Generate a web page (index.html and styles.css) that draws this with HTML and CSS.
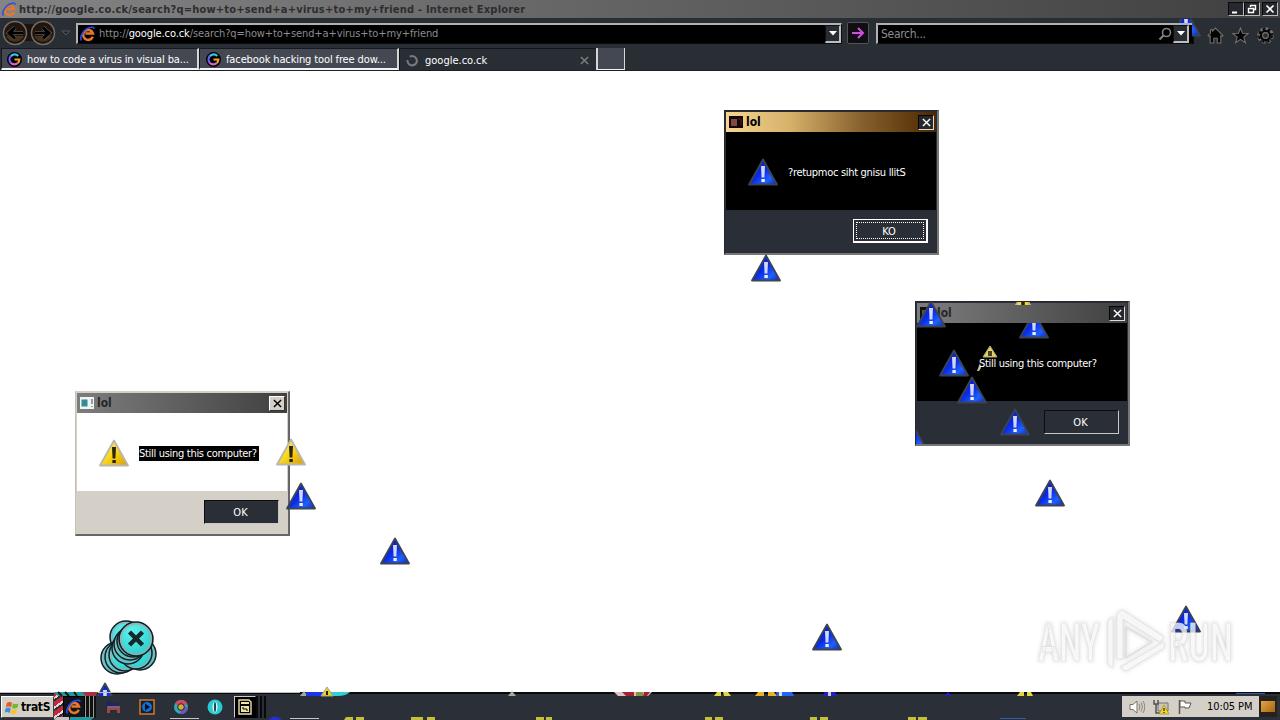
FILE: index.html
```html
<!DOCTYPE html>
<html lang="en">
<head>
    <meta charset="UTF-8">
    <meta name="viewport" content="width=device-width, initial-scale=1.0">
    <title>Internet Explorer</title>
    <link rel="stylesheet" href="styles.css">
</head>
<body>
    <svg class="defs">
        <defs>
            <linearGradient id="blueFill" x1="0" y1="0" x2="1" y2="1">
                <stop offset="0" stop-color="#0018c0"/>
                <stop offset="0.5" stop-color="#0a2ce8"/>
                <stop offset="0.75" stop-color="#2060fa"/>
                <stop offset="1" stop-color="#0624d8"/>
            </linearGradient>
            <linearGradient id="yellowFill" x1="0" y1="0" x2="1" y2="1">
                <stop offset="0" stop-color="#fff27a"/>
                <stop offset="0.5" stop-color="#f8d81c"/>
                <stop offset="1" stop-color="#d99a00"/>
            </linearGradient>
            <radialGradient id="cyanFill" cx="0.4" cy="0.3" r="0.8">
                <stop offset="0" stop-color="#5ff2ee"/>
                <stop offset="1" stop-color="#22c9c9"/>
            </radialGradient>
        </defs>
        <symbol id="warn-blue" viewBox="0 0 30 28">
            <path d="M15 1.5 L29 26.5 H1 Z" fill="url(#blueFill)" stroke="#3d4450" stroke-width="1.8" stroke-linejoin="round"/>
            <path d="M13 8h4l-.6 11.500h-2.800z" fill="#d4d8f6"/>
            <rect x="13.4" y="21" width="3.4" height="3" fill="#eef0ff"/>
        </symbol>
        <symbol id="warn-yellow" viewBox="0 0 30 28">
            <path d="M15 1.5 L29 26.5 H1 Z" fill="url(#yellowFill)" stroke="#b9b6b0" stroke-width="1.8" stroke-linejoin="round"/>
            <path d="M13 8h4l-.6 11.500h-2.800z" fill="#2b2408"/>
            <rect x="13.4" y="21" width="3.4" height="3" fill="#2b1c00"/>
        </symbol>
        <symbol id="ie" viewBox="0 0 16 16">
            <path d="M12.8 10.8A5 5 0 1 1 13 7.600H5.500" fill="none" stroke="#e87828" stroke-width="2.500"/>
            <path d="M1.500 14.500C-1 11 4 3 10 1.500c2.500-.7 4-.3 4 1.500" fill="none" stroke="#2a4cf0" stroke-width="1.600"/>
        </symbol>
        <symbol id="google" viewBox="0 0 16 16">
            <circle cx="8" cy="8" r="8" fill="#000"/>
            <path d="M12 4.300A5.200 5.200 0 0 0 4 4.600" fill="none" stroke="#30c8f0" stroke-width="2.300"/>
            <path d="M4 4.600a5.200 5.200 0 0 0 0 6.900" fill="none" stroke="#7060ff" stroke-width="2.300"/>
            <path d="M4 11.500a5.200 5.200 0 0 0 7.500.2" fill="none" stroke="#e060c8" stroke-width="2.300"/>
            <path d="M8 8h5.200a5 5 0 0 1-1.700 3.700" fill="none" stroke="#f0a030" stroke-width="2.300"/>
        </symbol>
        <symbol id="close" viewBox="0 0 10 10">
            <path d="M1 1l8 8M9 1l-8 8" fill="none" stroke="currentColor" stroke-width="1.600"/>
        </symbol>
        <symbol id="error-ball" viewBox="0 0 34 34">
            <circle cx="17" cy="17" r="16" fill="url(#cyanFill)" stroke="#151c22" stroke-width="1.500"/>
            <circle cx="17" cy="17" r="14.300" fill="none" stroke="#b99fa5" stroke-width="1"/>
        </symbol>
    </svg>

    <div class="screen">
        <header class="title-bar">
            <svg class="ie-small"><use href="#ie"/></svg>
            <span class="title-text">http://google.co.ck/search?q=how+to+send+a+virus+to+my+friend - Internet Explorer</span>
            <div class="window-buttons">
                <span class="win-btn"><svg viewBox="0 0 12 10"><path d="M2 8.500h5" stroke="#fff" stroke-width="2"/></svg></span>
                <span class="win-btn"><svg viewBox="0 0 12 10"><path d="M4.500 3V1.500h5v4H8M2.500 4.500h5v4h-5z" fill="none" stroke="#fff" stroke-width="1.400"/></svg></span>
                <span class="win-btn last"><svg viewBox="0 0 12 10"><path d="M2.500 1.500l7 7M9.500 1.500l-7 7" stroke="#fff" stroke-width="1.700"/></svg></span>
            </div>
        </header>

        <nav class="nav-bar">
            <svg class="nav-arrows" viewBox="0 0 56 28">
                <rect x="14" y="5" width="28" height="17" fill="#1c120e"/>
                <circle cx="14" cy="14" r="11.500" fill="#21150f" stroke="#726d65" stroke-width="1.500"/>
                <circle cx="42" cy="14" r="11.500" fill="#21150f" stroke="#726d65" stroke-width="1.500"/>
                <path d="M5 17a10 10 0 0 0 18 0zM33 17a10 10 0 0 0 18 0z" fill="#49311f"/>
                <path d="M22 14H8m6-5.500L8 14l6 5.500" fill="none" stroke="#8b8175" stroke-width="4.200"/>
                <path d="M22 14H8m6-5.500L8 14l6 5.500" fill="none" stroke="#000" stroke-width="3.200"/>
                <path d="M34 14h14m-6-5.500l6 5.500-6 5.500" fill="none" stroke="#8b8175" stroke-width="4.200"/>
                <path d="M34 14h14m-6-5.500l6 5.500-6 5.500" fill="none" stroke="#000" stroke-width="3.200"/>
            </svg>
            <svg class="nav-caret" viewBox="0 0 10 6"><path d="M1 1h8L5 5z" fill="#23262c" stroke="#555a62"/></svg>
            <div class="address-bar">
                <svg class="ie-icon"><use href="#ie"/></svg>
                <span class="url">http://<b>google.co.ck</b>/search?q=how+to+send+a+virus+to+my+friend</span>
                <span class="drop-btn"><svg viewBox="0 0 8 5"><path d="M0 0h8L4 4.500z" fill="#fff"/></svg></span>
            </div>
            <div class="go-btn">
                <svg viewBox="0 0 14 14"><path d="M1 7h11M7 2l5 5-5 5" fill="none" stroke="#cf4fe0" stroke-width="2"/></svg>
            </div>
            <div class="search-bar">
                <span class="search-text">Search...</span>
                <svg class="magnifier" viewBox="0 0 14 14"><circle cx="8.500" cy="5.500" r="4" fill="none" stroke="#85817c" stroke-width="1.600"/><path d="M5.500 8.500L1.500 12.500" stroke="#85817c" stroke-width="2.200"/></svg>
                <span class="drop-btn"><svg viewBox="0 0 8 5"><path d="M0 0h8L4 4.500z" fill="#fff"/></svg></span>
            </div>
            <div class="tools">
                <svg viewBox="0 0 16 16"><path d="M8 1l7 7-1 1-1-.6V15H9.600v-4.500H6.400V15H3V8.400L2 9 1 8l2.300-2.300V2.500h2v1.200z" fill="#050505" stroke="#77716c"/></svg>
                <svg viewBox="0 0 16 16"><path d="M8 .8l1.900 5.100 5.400.2-4.200 3.400 1.500 5.300L8 11.700l-4.600 3.100 1.500-5.300L.7 6.100l5.400-.2z" fill="#050505" stroke="#77716c"/></svg>
                <svg viewBox="0 0 16 16"><circle cx="8" cy="8" r="6.200" fill="none" stroke="#77716c" stroke-width="3.200" stroke-dasharray="2.900 1.970"/><circle cx="8" cy="8" r="6" fill="none" stroke="#050505" stroke-width="2" stroke-dasharray="1.900 2.970" stroke-dashoffset="-.5"/><circle cx="8" cy="8" r="4.200" fill="#292d34" stroke="#050505" stroke-width="2"/><circle cx="8" cy="8" r="2.700" fill="#292d34" stroke="#77716c"/></svg>
            </div>
        </nav>

        <div class="tab-bar">
            <div class="tab tab-first"><svg><use href="#google"/></svg><span>how to code a virus in visual ba...</span></div>
            <div class="tab tab-second"><svg><use href="#google"/></svg><span>facebook hacking tool free dow...</span></div>
            <div class="tab tab-active">
                <svg viewBox="0 0 16 16"><path d="M4 4.500A5 5 0 1 0 8 3" transform="rotate(-35 8 8)" fill="none" stroke="#777c83" stroke-width="2.200"/></svg>
                <span>google.co.ck</span>
                <svg class="tab-close"><use href="#close"/></svg>
            </div>
            <div class="new-tab"></div>
        </div>

        <main class="page"></main>

        <footer class="taskbar">
            <div class="start-btn">
                <svg viewBox="0 0 16 16"><path d="M2 3q3-2 5.500 0L6.500 8Q4 6 .8 8z" fill="#e85b28"/><path d="M8.500 3.400q3 1.800 6 0L13.400 8q-3 2-6 .4z" fill="#74b83a"/><path d="M.6 9q3-2 5.600 0L5 14Q2.500 12-.4 13.500z" fill="#3d8edd"/><path d="M7.200 9.500q3 1.500 6 0L12 14.300q-3 1.500-6 0z" fill="#f5c52c"/></svg>
                <b>tratS</b>
            </div>
            <div class="glitch"></div>
            <div class="task task-ie"><svg><use href="#ie"/></svg></div>
            <div class="task-edge"></div>
            <div class="quick">
                <svg viewBox="0 0 16 16"><path d="M1 2h5l1 2h7v8H1z" fill="#20285a"/><path d="M2 7h13v7h-3v-3H5v3H2z" fill="#9c4b38"/><path d="M3 8h11" stroke="#4878d8"/></svg>
                <svg viewBox="0 0 16 16"><rect x="1" y="1" width="14" height="14" fill="#101e35" stroke="#d47a20" stroke-width="1.500"/><circle cx="8" cy="8" r="5" fill="#1470d0"/><path d="M6 4.500l5 3.500-5 3.500z" fill="#08101c"/></svg>
                <svg viewBox="0 0 16 16"><circle cx="8" cy="8" r="7" fill="#28aeb0"/><path d="M8 8L2 4.500A7 7 0 0 1 14.500 5z" fill="#ce4b64"/><path d="M8 8h7a7 7 0 0 1-8 7z" fill="#7454bf"/><circle cx="8" cy="8" r="3.300" fill="#d8a83c" stroke="#26202a"/></svg>
                <svg viewBox="0 0 16 16"><circle cx="8" cy="8" r="7.500" fill="#27cbd2"/><ellipse cx="8" cy="8" rx="2.500" ry="5.500" fill="#e9fbfa"/><ellipse cx="8" cy="8" rx="1.100" ry="5" fill="#174b55"/></svg>
            </div>
            <div class="task task-app"><svg viewBox="0 0 16 16"><path d="M2 1h10l2 2v12H2z" fill="#000" stroke="#e8e0b0" stroke-width="1.400"/><path d="M4 4h8" stroke="#f3e7a0" stroke-width="2"/><rect x="4" y="7" width="8" height="6" fill="#efe3a0"/><path d="M5 9h2v2m2-2v2h2" fill="none" stroke="#000"/></svg></div>
            <div class="task-edge dark"></div>
            <div class="tray">
                <svg viewBox="0 0 16 16"><path d="M1 5.500h3L8 2v12l-4-3.500H1z" fill="#fff" stroke="#77736d"/><path d="M10 5q2 3 0 6M12 3.500q3 4.500 0 9M14 2q3.500 6 0 12" fill="none" stroke="#8b8780"/></svg>
                <svg viewBox="0 0 16 16"><path d="M5 4h10v8H5z" fill="#c8c6bd" stroke="#77736d"/><path d="M1 1v4h2v9h4M5 1v4H3" fill="none" stroke="#55524e" stroke-width="1.500"/><path d="M11 6l5 9H6z" fill="#f5d72b" stroke="#9c8618" stroke-width=".7"/><path d="M11 9v3m0 1v1" stroke="#222" stroke-width="1.200"/></svg>
                <svg viewBox="0 0 16 16"><path d="M2.500 1v14" stroke="#5b5853" stroke-width="1.500"/><path d="M3 2h5v2h6l-2 5H8V8H3z" fill="#fff" stroke="#5b5853"/></svg>
                <span class="clock">10:05 PM</span>
            </div>
            <div class="show-desktop"></div>
        </footer>

        <svg class="pin toolbar-pin"><use href="#warn-blue"/></svg>

        <!-- dialogs -->
        <section class="dialog dialog-gold">
            <div class="dialog-title">
                <svg class="app-icon" viewBox="0 0 14 12"><rect width="14" height="12" fill="#16080a"/><rect x="2" y="3" width="6" height="7" fill="#824943"/><path d="M9 3h3v6" stroke="#4b2423" fill="none"/></svg>
                <b>lol</b>
                <span class="dialog-close"><svg><use href="#close"/></svg></span>
            </div>
            <div class="dialog-body">
                <svg class="dialog-icon"><use href="#warn-blue"/></svg>
                <span class="dialog-text">?retupmoc siht gnisu llitS</span>
            </div>
            <div class="dialog-footer"><div class="btn btn-focus"><span>KO</span></div></div>
        </section>

        <section class="dialog dialog-dark">
            <div class="dialog-title">
                <svg class="app-icon" viewBox="0 0 14 12"><rect width="14" height="12" fill="#111"/><rect x="2" y="3" width="6" height="7" fill="#55534c"/></svg>
                <b>lol</b>
                <span class="dialog-close"><svg><use href="#close"/></svg></span>
            </div>
            <div class="dialog-body">
                <svg class="dialog-icon"><use href="#warn-blue"/></svg>
                <svg class="in-body-tip" viewBox="0 0 22 28"><path d="M14 1l7 11H7z" fill="#e5d354" stroke="#aaa491"/><path d="M12 6h4v5h-4z" fill="#49401c"/><path d="M1 26l3-8 1 5-2 3z" fill="#c9bd97"/></svg>
                <span class="dialog-text">Still using this computer?</span>
                <svg class="pin in-body-top"><use href="#warn-blue"/></svg>
            </div>
            <div class="dialog-footer"><div class="btn"><span>OK</span></div></div>
            <svg class="pin in-title"><use href="#warn-blue"/></svg>
            <svg class="pin in-middle"><use href="#warn-blue"/></svg>
            <svg class="pin in-footer"><use href="#warn-blue"/></svg>
            <svg class="pin in-corner"><use href="#warn-blue"/></svg>
            <svg class="pin in-top"><use href="#warn-yellow"/></svg>
        </section>

        <section class="dialog dialog-light">
            <div class="dialog-title">
                <svg class="app-icon" viewBox="0 0 14 12"><rect width="14" height="12" fill="#f0f3f3"/><rect x="1.500" y="2.500" width="6" height="7" fill="#318c94"/><path d="M12 2v5m0 2v1" stroke="#444"/></svg>
                <b>lol</b>
                <span class="dialog-close"><svg><use href="#close"/></svg></span>
            </div>
            <div class="dialog-body">
                <svg class="dialog-icon"><use href="#warn-yellow"/></svg>
                <span class="dialog-text">Still using this computer?</span>
            </div>
            <div class="dialog-footer"><div class="btn"><span>OK</span></div></div>
        </section>

        <!-- icons left on the desktop -->
        <svg class="pin pin-a"><use href="#warn-blue"/></svg>
        <svg class="pin pin-b"><use href="#warn-blue"/></svg>
        <svg class="pin pin-c"><use href="#warn-blue"/></svg>
        <svg class="pin pin-d"><use href="#warn-blue"/></svg>
        <svg class="pin pin-e"><use href="#warn-blue"/></svg>
        <svg class="pin pin-f"><use href="#warn-blue"/></svg>
        <svg class="pin pin-g"><use href="#warn-yellow"/></svg>
        <svg class="pin pin-h"><use href="#warn-blue"/></svg>

        <svg class="error-pile" viewBox="0 0 60 58">
            <use href="#error-ball" x="10" y="1" width="34" height="34"/>
            <use href="#error-ball" x="1" y="22" width="34" height="34"/>
            <use href="#error-ball" x="5" y="21" width="34" height="34"/>
            <use href="#error-ball" x="9" y="19" width="34" height="34"/>
            <use href="#error-ball" x="24" y="18" width="34" height="34"/>
            <use href="#error-ball" x="20" y="17" width="34" height="34"/>
            <use href="#error-ball" x="12" y="12" width="34" height="34"/>
            <use href="#error-ball" x="14" y="8" width="34" height="34"/>
            <use href="#error-ball" x="17" y="5" width="34" height="34"/>
            <use href="#error-ball" x="19" y="2" width="36" height="36"/>
            <path d="M30.500 13l13 13M43.500 13l-13 13" stroke="#17282c" stroke-width="4.500"/>
        </svg>

        <!-- scraps showing along the taskbar edges -->
        <svg class="scraps" viewBox="0 0 1280 34">
            <path d="M0 6.500h300" stroke="#bdbdbd"/>
            <path d="M54 6h44l-3 4H58z" fill="#249a9c"/><path d="M58 6l4 4m3-4l4 4m5-4l3 4" stroke="#10181c" stroke-width="2"/><path d="M82 6h16l-3 4h-9z" fill="#a83040"/>
            <path d="M300 10l4-5 4 5zM508 10l4-5 4 5z" fill="#aaa89a"/>
            <path d="M306 6h20v4h-20z" fill="#1936ef"/>
            <path d="M330 6h20q-4 4-12 4h-8z" fill="#2fd0d2"/>
            <path d="M321 10l6-9 6 9z" fill="#ead22c" stroke="#aaa27b"/>
            <path d="M327 5v4" stroke="#28220c" stroke-width="2"/>
            <path d="M614 6h38l-4 4h-30z" fill="#d8c7c9"/><path d="M622 6h12v4h-8zM644 6h6l-3 4h-4z" fill="#a62033"/><path d="M636 6h7v4h-7z" fill="#849638"/>
            <path d="M714 10l3-4h4v4zM724 10l-1-4h5l3 4zM1017 10l3-4h4v4zM1027 10v-4h4l2 4z" fill="#dfd83e"/>
            <path d="M755 10l3-4h6v4zM768 10v-4h6l3 4z" fill="#e6b323"/>
            <path d="M776 6h16l2 4h-17z" fill="#2464f2"/><path d="M779 6h3v4h-3z" fill="#ddd"/>
            <path d="M822 10l3-4h10l2 4zM945 10l3-4 4 4z" fill="#2020c9"/><path d="M828 6h3v4h-3z" fill="#ccd"/>
            <path d="M344 34l2-3h7v3zM356 34v-3h8v3zM411 34v-3h12v3zM427 34v-3h8v3zM536 34v-3h8v3zM546 34v-3h6v3zM705 34v-3h7v3zM715 34v-3h8v3zM810 34v-3h7v3zM820 34v-3h8v3zM908 34v-3h8v3zM918 34v-3h9v3z" fill="#c4c03c"/>
            <path d="M54 34l3-3h12v3z" fill="#c8c0c4"/><path d="M70 34v-3h24l-3 3z" fill="#249a9c"/>
            <path d="M170 32.500h29M290 32.500h29" stroke="#c7c7c9"/><path d="M268 34l4-3h6l4 3z" fill="#2331d0"/>
            <path d="M1000 32.500h26M1236 7.500h29" stroke="#3959a9"/>
        </svg>

        <svg class="watermark" viewBox="0 0 250 75">
            <g fill="#ffffff" fill-opacity=".75" stroke="#dedede" stroke-width=".7">
                <text x="17" y="56" textLength="62" lengthAdjust="spacingAndGlyphs">ANY</text>
                <text x="147" y="56" textLength="65" lengthAdjust="spacingAndGlyphs">RUN</text>
                <path d="M87 16l5-4v51l-5-4zM96 9l5-4 42 27-4 5-37-23v40h-6zM102 61l41-24v6L105 66l-6-4z"/>
                <path d="M105 22l26 15-26 16z" fill="none" stroke-width="1.500"/>
            </g>
        </svg>
    </div>
</body>
</html>
```
FILE: styles.css
```css
* {
    box-sizing: border-box;
}

body {
    margin: 0;
    background-color: #ffffff;
    font-family: 'DejaVu Sans Condensed', 'DejaVu Sans', sans-serif;
    font-stretch: condensed;
    font-size: 11px;
    overflow: hidden;
}

svg {
    display: block;
    flex-shrink: 0;
}

.defs {
    position: absolute;
    width: 0;
    height: 0;
}

.screen {
    position: relative;
    display: flex;
    flex-direction: column;
    width: 1280px;
    height: 720px;
    overflow: hidden;
    background-color: #ffffff;
}

/* Title bar */
.title-bar {
    display: flex;
    align-items: center;
    height: 18px;
    padding: 0 2px 0 2px;
    background: linear-gradient(90deg, #848484, #404040);
    color: #2c2d32;
}

.ie-small {
    width: 15px;
    height: 15px;
    margin-right: 2px;
}

.title-text {
    flex: 1;
    font-weight: bold;
    white-space: nowrap;
    letter-spacing: 0.21px;
}

.window-buttons {
    display: flex;
}

.win-btn {
    width: 16px;
    height: 14px;
    padding: 1px;
    background-color: #25292f;
    border: 1px solid #08090a;
    border-right-color: #bbbbbb;
    border-bottom-color: #bbbbbb;
}

.win-btn svg {
    width: 12px;
    height: 10px;
}

.win-btn.last {
    margin-left: 2px;
}

/* Address row */
.nav-bar {
    display: flex;
    align-items: center;
    height: 30px;
    background-color: #292d34;
}

.nav-arrows {
    width: 56px;
    height: 28px;
    margin-left: 1px;
}

.nav-caret {
    width: 10px;
    height: 6px;
    margin: 0 10px 0 4px;
}

.address-bar,
.search-bar {
    display: flex;
    align-items: center;
    height: 21px;
    background-color: #000000;
    border: 1px solid #0c0d0f;
    border-top: 2px solid #b0b1b3;
    border-left: 2px solid #b0b1b3;
    color: #8c8c8c;
}

.address-bar {
    width: 766px;
    margin-left: -5px;
}

.ie-icon {
    width: 16px;
    height: 16px;
    margin: 0 3px 0 2px;
}

.url {
    flex: 1;
    white-space: nowrap;
    letter-spacing: -0.1px;
}

.url b {
    font-weight: normal;
    color: #ffffff;
}

.drop-btn {
    display: flex;
    align-items: center;
    justify-content: center;
    width: 16px;
    height: 18px;
    background-color: #282c33;
    border: 1px solid #111111;
    border-right: 2px solid #bdbdbd;
    border-bottom: 2px solid #bdbdbd;
}

.drop-btn svg {
    width: 8px;
    height: 5px;
}

.go-btn {
    display: flex;
    align-items: center;
    justify-content: center;
    width: 22px;
    height: 22px;
    margin: 0 7px 0 5px;
    background-color: #110e13;
    border: 1px solid #50535a;
    border-radius: 2px;
}

.go-btn svg {
    width: 14px;
    height: 14px;
}

.search-bar {
    width: 318px;
}

.search-text {
    flex: 1;
    padding-left: 3px;
    font-size: 12px;
    letter-spacing: -0.3px;
}

.magnifier {
    width: 14px;
    height: 14px;
    margin-right: 1px;
}

.search-bar .drop-btn {
    margin-right: 4px;
}

.tools {
    display: flex;
    gap: 8px;
    margin: 4px 0 0 13px;
}

.tools svg {
    width: 17px;
    height: 17px;
}

/* Tabs */
.tab-bar {
    display: flex;
    height: 23px;
    background-color: #292d34;
    color: #ffffff;
    border-bottom: 1px solid #1c2025;
}

.tab {
    display: flex;
    align-items: center;
    height: 22px;
    padding-top: 1px;
    padding-left: 5px;
    background-color: #444852;
    border: 1px solid #17191d;
    border-right: 2px solid #d6d6d8;
    border-bottom: 2px solid #f3f3f3;
    white-space: nowrap;
    letter-spacing: -0.12px;
}

.tab svg {
    width: 15px;
    height: 15px;
    margin-right: 5px;
}

.tab-first {
    width: 198px;
    margin-left: 1px;
}

.tab-second {
    width: 200px;
    padding-left: 6px;
}

.tab-active {
    width: 197px;
    background-color: #292d34;
    border-color: #111418;
    border-bottom: 0;
    border-right: 0;
    letter-spacing: 0;
}

.tab-active span {
    flex: 1;
}

.tab .tab-close {
    width: 9px;
    height: 9px;
    margin-right: 7px;
    color: #7c8085;
}

.new-tab {
    width: 29px;
    height: 22px;
    background-color: #444852;
    border-left: 2px solid #d6d6d8;
    border-right: 1px solid #d6d6d8;
    border-bottom: 1px solid #f3f3f3;
}

.page {
    flex: 1;
}

/* Taskbar */
.taskbar {
    display: flex;
    align-items: stretch;
    height: 28px;
    padding-top: 2px;
    background-color: #2b2f37;
    border-top: 2px solid #08090b;
}

.start-btn {
    display: flex;
    align-items: center;
    width: 53px;
    height: 22px;
    margin-left: 1px;
    padding-left: 3px;
    gap: 1px;
    background-color: #d4d0c8;
    border: 1px solid #ffffff;
    border-right-color: #404040;
    border-bottom-color: #404040;
    color: #000000;
    font-size: 12px;
    letter-spacing: -0.3px;
}

.start-btn svg {
    width: 15px;
    height: 15px;
}

.glitch {
    width: 9px;
    margin-top: -4px;
    background: repeating-linear-gradient(145deg, #c3273b 0 4px, #e6d2d4 4px 6px, #253137 6px 8px);
}

.task {
    display: flex;
    align-items: center;
    justify-content: center;
    width: 22px;
    height: 22px;
    background-color: #11141a;
    border: 1px solid #000000;
}

.task svg {
    width: 16px;
    height: 16px;
}

.task-edge {
    width: 11px;
    height: 22px;
    background: repeating-linear-gradient(90deg, #9a9a98 0 1px, #111111 1px 4px);
}

.task-edge.dark {
    width: 10px;
    background: repeating-linear-gradient(90deg, #08090b 0 2px, #292d34 2px 4px);
}

.quick {
    display: flex;
    align-items: center;
    gap: 18px;
    height: 22px;
    padding: 0 11px 0 9px;
}

.quick svg {
    width: 16px;
    height: 16px;
}

.task-app {
    width: 22px;
    background-color: #000000;
    border-left: 1px solid #cccccc;
    border-top: 1px solid #cccccc;
}

.tray {
    display: flex;
    align-items: center;
    width: 137px;
    height: 21px;
    margin-left: auto;
    padding-left: 7px;
    gap: 8px;
    background-color: #d4d0c8;
    color: #000000;
}

.tray svg {
    width: 16px;
    height: 16px;
}

.clock {
    margin-left: 6px;
    white-space: nowrap;
    letter-spacing: -0.1px;
}

.show-desktop {
    width: 18px;
    height: 21px;
    margin-right: 3px;
    background: linear-gradient(135deg, #e4a642, #a46416);
    border: 2px solid #26211c;
    border-top-width: 5px;
    border-bottom-width: 5px;
}

/* Dialogs */
.dialog {
    position: absolute;
    display: flex;
    flex-direction: column;
    width: 215px;
    height: 145px;
    padding: 1px;
    background-color: #2a2e36;
    border: 1px solid #24272c;
    border-right: 2px solid #777777;
    border-bottom: 2px solid #777777;
    overflow: hidden;
    color: #ffffff;
}

.dialog-gold {
    left: 724px;
    top: 110px;
}

.dialog-dark {
    left: 915px;
    top: 301px;
}

.dialog-light {
    left: 75px;
    top: 391px;
    background-color: #d4d0c8;
    border-color: #d4d0c8 #666666 #666666 #c4c0b9;
}

.dialog-title {
    display: flex;
    align-items: center;
    height: 20px;
    padding: 0 2px 0 3px;
    background: linear-gradient(90deg, #7d7d7d, #404040);
    color: #26272a;
    font-size: 12px;
}

.dialog-gold .dialog-title {
    background: linear-gradient(90deg, #f5d590, #d6b26b 30%, #86602c 65%, #4b2800);
    color: #000000;
}

.app-icon {
    width: 14px;
    height: 12px;
    margin-right: 3px;
}

.dialog-title b {
    flex: 1;
}

.dialog-close {
    display: flex;
    align-items: center;
    justify-content: center;
    width: 16px;
    height: 15px;
    background-color: #25282e;
    border: 1px solid #050505;
    border-right-color: #dddddd;
    border-bottom-color: #dddddd;
    color: #ffffff;
}

.dialog-close svg {
    width: 9px;
    height: 9px;
}

.dialog-light .dialog-close {
    background-color: #d4d0c8;
    border-color: #ffffff #333333 #333333 #ffffff;
    color: #000000;
}

.dialog-body {
    position: relative;
    display: flex;
    align-items: center;
    height: 78px;
    padding-top: 2px;
    padding-left: 22px;
    background-color: #000000;
    overflow: hidden;
}

.dialog-light .dialog-body {
    background-color: #ffffff;
}

.dialog-icon {
    width: 30px;
    height: 28px;
}

.dialog-text {
    position: relative;
    margin-left: 10px;
    white-space: nowrap;
    letter-spacing: -0.3px;
    line-height: 15px;
}

.dialog-light .dialog-text {
    width: 120px;
    background-color: #000000;
}

.dialog-footer {
    display: flex;
    justify-content: flex-end;
    padding: 9px 8px 0 0;
}

.btn {
    display: flex;
    width: 75px;
    height: 24px;
    background-color: #2a2e36;
    border: 1px solid #0c0d0f;
    border-right-color: #c8c8c8;
    border-bottom-color: #c8c8c8;
}

.btn span {
    flex: 1;
    text-align: center;
    line-height: 23px;
    padding-right: 2px;
}

.btn-focus {
    padding: 2px;
    border: 1px solid #ffffff;
    border-right-width: 2px;
    border-bottom-width: 2px;
}

.btn-focus span {
    border: 1px dotted #ffffff;
    line-height: 17px;
}

/* Loose warning icons */
.pin {
    position: absolute;
    width: 30px;
    height: 28px;
}

.toolbar-pin {
    left: 1171px;
    top: 9px;
    clip-path: polygon(8px 10px, 30px 10px, 30px 28px, 21px 28px, 21px 14px, 8px 14px);
}

.in-title {
    left: 0;
    top: -2px;
}

.in-middle {
    left: 41px;
    top: 74px;
}

.in-footer {
    left: 84px;
    top: 106px;
}

.in-corner {
    left: -18px;
    top: 122px;
}

.in-top {
    left: 92px;
    top: -11px;
    clip-path: inset(10px 0 14px 0);
}

.in-body-top {
    left: 102px;
    top: -12px;
}

.in-body-tip {
    position: absolute;
    left: 59px;
    top: 22px;
    width: 22px;
    height: 28px;
}

.pin-a {
    left: 751px;
    top: 254px;
}

.pin-b {
    left: 1035px;
    top: 479px;
}

.pin-c {
    left: 812px;
    top: 623px;
}

.pin-d {
    left: 1171px;
    top: 605px;
}

.pin-e {
    left: 380px;
    top: 537px;
}

.pin-f {
    left: 286px;
    top: 482px;
}

.pin-g {
    left: 276px;
    top: 438px;
}

.pin-h {
    left: 90px;
    top: 682px;
    clip-path: inset(0 0 14px 0);
}

.error-pile {
    position: absolute;
    left: 99px;
    top: 619px;
    width: 60px;
    height: 58px;
}

.scraps {
    position: absolute;
    left: 0;
    top: 686px;
    width: 1280px;
    height: 34px;
}

.watermark {
    position: absolute;
    left: 1021px;
    top: 605px;
    width: 250px;
    height: 75px;
    overflow: visible;
    font-family: Roboto, sans-serif;
    font-weight: 500;
    font-size: 53px;
    filter: drop-shadow(0 0 2px rgba(0, 0, 0, 0.2));
}
```
